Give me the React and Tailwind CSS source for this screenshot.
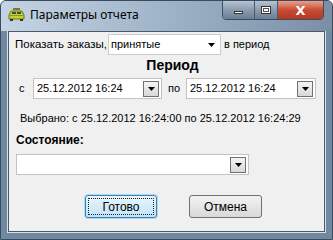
import React from "react";

const font = { fontFamily: "'Liberation Sans', Arial, sans-serif" };

function Arrow() {
  return (
    <svg width="7" height="4" viewBox="0 0 7 4">
      <path d="M0 0 H7 L3.5 4 Z" fill="#000" />
    </svg>
  );
}

function DropButton() {
  return (
    <div className="flex items-center justify-center w-[16px] h-[16px] border border-[#707070] bg-gradient-to-b from-[#f4f4f4] to-[#d8d8d8]">
      <Arrow />
    </div>
  );
}

function DatePicker({ value, width }) {
  return (
    <div
      className={`flex items-center justify-between h-[21px] pl-[3px] pr-[2px] bg-white border border-[#c3c3c3] whitespace-nowrap ${width}`}
    >
      <span className="text-[11px] text-black leading-none">{value}</span>
      <DropButton />
    </div>
  );
}

function TaxiIcon() {
  return (
    <svg width="17" height="13" viewBox="0 0 17 13">
      <rect x="5" y="0" width="7" height="2" fill="#7a7a1a" />
      <path d="M3 3 H14 L16 7 V11 H1 V7 Z" fill="#c5d22a" stroke="#6d7418" strokeWidth="1" />
      <rect x="4" y="4" width="4" height="2" fill="#3d4a4a" />
      <rect x="9" y="4" width="4" height="2" fill="#3d4a4a" />
      <rect x="2" y="7" width="13" height="1" fill="#8d9a1c" />
      <rect x="2" y="11" width="3" height="2" fill="#333" />
      <rect x="12" y="11" width="3" height="2" fill="#333" />
    </svg>
  );
}

export default function App() {
  return (
    <div
      className="w-[333px] h-[240px] flex flex-col rounded-t-[6px] border border-[#3b4b5c] bg-[#7088a0] overflow-hidden whitespace-nowrap"
      style={font}
    >
      <div className="relative h-[30px] flex items-start bg-gradient-to-r from-[#c4d4e4] via-[#9fb3c8] to-[#7a8fa6]">
        <div className="flex items-center gap-[5px] pl-[7px] pt-[7px]">
          <TaxiIcon />
          <span
            className="text-[12px] text-black leading-none"
            style={{ fontFamily: "'Noto Sans', 'DejaVu Sans', sans-serif" }}
          >
            Параметры отчета
          </span>
        </div>
        <div className="absolute right-[8px] top-[-1px] flex h-[20px] rounded-b-[4px] border border-[#3e4d5e] overflow-hidden">
          <div className="w-[32px] flex items-center justify-center border-r border-[#4a5a6b] bg-gradient-to-b from-[#b6c4d2] via-[#8c9cb0] to-[#6b7d92]">
            <div className="w-[9px] h-[3px] bg-white border border-[#333] mt-[5px]" />
          </div>
          <div className="w-[23px] flex items-center justify-center border-r border-[#4a5a6b] bg-gradient-to-b from-[#b6c4d2] via-[#8c9cb0] to-[#6b7d92]">
            <div className="w-[10px] h-[8px] bg-white border border-[#333] flex items-center justify-center">
              <div className="w-[6px] h-[4px] border border-[#555]" />
            </div>
          </div>
          <div className="w-[45px] flex items-center justify-center bg-gradient-to-b from-[#e6a08e] via-[#c94a34] to-[#b33a22]">
            <span className="text-[13px] font-bold text-white leading-none" style={{ fontFamily: "'DejaVu Sans', sans-serif" }}>
              X
            </span>
          </div>
        </div>
      </div>

      <div className="mx-[7px] mb-[7px] flex-1 border border-[#4a5a6c] outline outline-1 outline-[#d8e2ec] bg-[#f0f0f0] flex flex-col text-black">
        <div className="flex items-center mt-[2px] h-[21px] pl-[6px]">
          <span className="w-[93px] text-[11.5px] leading-none">Показать заказы,</span>
          <div className="w-[113px] h-[21px] bg-white border border-[#cdcdcd] flex items-center justify-between pl-[2px] pr-[5px]">
            <span className="text-[11px] leading-none">принятые</span>
            <Arrow />
          </div>
          <span className="ml-[3px] text-[11px] leading-none">в период</span>
        </div>

        <div className="mt-[1px] text-center text-[14px] font-bold leading-[18px] pl-[12px]">Период</div>

        <div className="flex items-center mt-[4px] h-[21px] pl-[10px]">
          <span className="w-[14px] text-[11px] leading-none">с</span>
          <DatePicker value="25.12.2012 16:24" width="w-[129px]" />
          <span className="ml-[6px] w-[18px] text-[11px] leading-none">по</span>
          <DatePicker value="25.12.2012 16:24" width="w-[130px]" />
        </div>

        <div className="mt-[12px] pl-[11px] text-[11px] leading-[14px]">
          Выбрано: с 25.12.2012 16:24:00 по 25.12.2012 16:24:29
        </div>

        <div className="mt-[8px] pl-[7px] text-[12px] font-bold leading-[14px]">Состояние:</div>

        <div className="mt-[7px] ml-[7px] w-[233px] h-[21px] bg-white border border-[#c3c3c3] flex items-center justify-end pr-[2px]">
          <DropButton />
        </div>

        <div className="flex mt-[20px] pl-[76px] gap-[32px]">
          <button className="w-[72px] h-[23px] rounded-[3px] border border-[#3c7fb1] bg-gradient-to-b from-[#eaf6fd] to-[#bfe3f8] p-[2px] shadow-[0_0_0_1px_#a9dcf6]">
            <div className="w-full h-full border border-dotted border-[#222] flex items-center justify-center text-[12px] leading-none">
              Готово
            </div>
          </button>
          <button className="w-[73px] h-[23px] rounded-[3px] border border-[#707070] bg-gradient-to-b from-[#f2f2f2] to-[#d9d9d9] flex items-center justify-center text-[12px] leading-none">
            Отмена
          </button>
        </div>
      </div>
    </div>
  );
}
